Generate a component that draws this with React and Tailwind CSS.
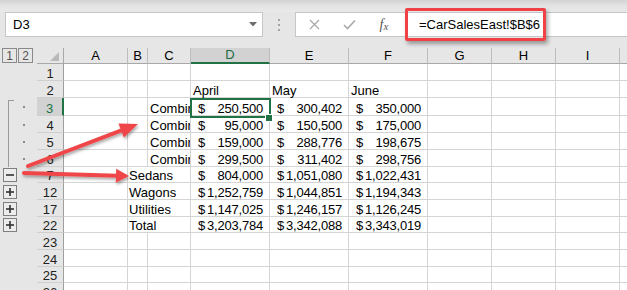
import React from "react";

const cols = [
  { k: "A", w: "w-[64px]" },
  { k: "B", w: "w-[20px]" },
  { k: "C", w: "w-[43px]" },
  { k: "D", w: "w-[79px]" },
  { k: "E", w: "w-[79px]" },
  { k: "F", w: "w-[79px]" },
  { k: "G", w: "w-[64px]" },
  { k: "H", w: "w-[64px]" },
  { k: "I", w: "w-[64px]" },
  { k: "J", w: "w-[64px]" },
];

const rows = [
  { n: 1, h: "h-[17px]" },
  { n: 2, h: "h-[17px]", heads: ["April", "May", "June"] },
  { n: 3, h: "h-[18px]", c: "Combined", nums: ["250,500", "300,402", "350,000"], mark: "dot", bracket: "top", sel: true },
  { n: 4, h: "h-[17px]", c: "Combined", nums: ["95,000", "150,500", "175,000"], mark: "dot", bracket: "mid" },
  { n: 5, h: "h-[17px]", c: "Combined", nums: ["159,000", "288,776", "198,675"], mark: "dot", bracket: "mid" },
  { n: 6, h: "h-[17px]", c: "Combined", nums: ["299,500", "311,402", "298,756"], mark: "dot", bracket: "mid" },
  { n: 7, h: "h-[16px]", b: "Sedans", nums: ["804,000", "1,051,080", "1,022,431"], mark: "minus" },
  { n: 12, h: "h-[17px]", b: "Wagons", nums: ["1,252,759", "1,044,851", "1,194,343"], mark: "plus" },
  { n: 17, h: "h-[17px]", b: "Utilities", nums: ["1,147,025", "1,246,157", "1,126,245"], mark: "plus" },
  { n: 22, h: "h-[16px]", b: "Total", nums: ["3,203,784", "3,342,088", "3,343,019"], mark: "plus" },
  { n: 23, h: "h-[17px]" },
  { n: 24, h: "h-[17px]" },
  { n: 25, h: "h-[16px]" },
  { n: 26, h: "h-[17px]" },
];

function OutlineBox({ plus }) {
  return (
    <div className="ml-[3px] w-[14px] h-[14px] border border-[#7f7f7f] bg-[#ececec] flex items-center justify-center">
      <svg width="10" height="10" viewBox="0 0 10 10">
        <line x1="1" y1="5" x2="9" y2="5" stroke="#333" strokeWidth="1.6" />
        {plus && <line x1="5" y1="1" x2="5" y2="9" stroke="#333" strokeWidth="1.6" />}
      </svg>
    </div>
  );
}

function Gutter({ row }) {
  return (
    <div className="w-[37px] relative flex items-center shrink-0">
      {row.bracket === "top" && (
        <div className="absolute left-[8px] top-[2px] bottom-0 w-[6px] border-l border-t border-[#9a9a9a]" />
      )}
      {row.bracket === "mid" && <div className="absolute left-[8px] top-0 bottom-0 border-l border-[#9a9a9a]" />}
      {row.mark === "dot" && <div className="ml-[23px] w-[2px] h-[2px] bg-[#8a8a8a]" />}
      {row.mark === "minus" && <OutlineBox />}
      {row.mark === "plus" && <OutlineBox plus />}
    </div>
  );
}

function Money({ v }) {
  return (
    <div className="flex-1 flex items-end justify-between pl-[7px] pr-[6px] leading-[13px]">
      <span>$</span>
      <span className="tracking-[-0.2px]">{v}</span>
    </div>
  );
}

function Row({ row }) {
  const active = row.sel;
  return (
    <div className={`flex ${row.h}`}>
      <Gutter row={row} />
      <div
        className={`w-[27px] shrink-0 flex items-end justify-center leading-[13px] border-b border-[#cfcfcf] ${
          active
            ? "bg-[#d2d2d2] text-[#217346] border-r-2 border-r-[#217346]"
            : "bg-[#e6e6e6] text-[#222] border-r border-r-[#9f9f9f]"
        }`}
      >
        {row.n}
      </div>
      <div className="flex bg-white">
        {cols.map((col) => {
          const base = `${col.w} shrink-0 border-b border-[#d4d4d4] flex relative`;
          if (col.k === "B") {
            return (
              <div key={col.k} className={`${base} ${row.b ? "" : "border-r"}`}>
                {row.b && (
                  <span className="pl-[1px] self-end leading-[13px] whitespace-nowrap relative z-10">{row.b}</span>
                )}
              </div>
            );
          }
          if (col.k === "C") {
            return (
              <div key={col.k} className={`${base} border-r overflow-hidden`}>
                {row.c && <span className="pl-[2px] self-end leading-[13px] whitespace-nowrap">{row.c}</span>}
              </div>
            );
          }
          const i = ["D", "E", "F"].indexOf(col.k);
          return (
            <div key={col.k} className={`${base} border-r`}>
              {i >= 0 && row.heads && <span className="pl-[2px] self-end leading-[13px]">{row.heads[i]}</span>}
              {i >= 0 && row.nums && <Money v={row.nums[i]} />}
              {i === 0 && active && (
                <>
                  <div className="absolute left-[-1px] top-[0px] w-[81px] h-[20px] border-2 border-[#217346] z-20" />
                  <div className="absolute left-[75px] top-[17px] w-[6px] h-[6px] bg-[#217346] ring-1 ring-white z-30" />
                </>
              )}
            </div>
          );
        })}
      </div>
    </div>
  );
}

function Arrow({ x1, y1, x2, y2, head, half }) {
  const dx = x2 - x1;
  const dy = y2 - y1;
  const len = Math.hypot(dx, dy);
  const ux = dx / len;
  const uy = dy / len;
  const bx = x2 - ux * head;
  const by = y2 - uy * head;
  const px = -uy * half;
  const py = ux * half;
  return (
    <g filter="url(#sh)">
      <line x1={x1} y1={y1} x2={bx + ux} y2={by + uy} stroke="#ef4749" strokeWidth="4" strokeLinecap="round" />
      <polygon points={`${x2},${y2} ${bx + px},${by + py} ${bx - px},${by - py}`} fill="#ef4749" />
    </g>
  );
}

export default function App() {
  return (
    <div className="w-[627px] h-[290px] overflow-hidden relative bg-[#e6e6e6] font-['Liberation_Sans',Arial,sans-serif] text-[13px] text-black">
      {/* top strip */}
      <div className="h-[12px] bg-gradient-to-b from-[#d3d3d3] via-[#e4e4e4] to-[#e9e9e9]" />

      {/* name box + formula bar */}
      <div className="flex h-[25px]">
        <div className="ml-[5px] w-[258px] h-[25px] bg-white border border-[#c6c6c6] flex items-center justify-between pl-[7px] pr-[5px]">
          <span>D3</span>
          <svg width="8" height="5" viewBox="0 0 8 5">
            <polygon points="0,0 8,0 4,4.5" fill="#6d6d6d" />
          </svg>
        </div>
        <div className="w-[32px] flex flex-col items-center justify-center gap-[3px]">
          <div className="w-[2px] h-[2px] bg-[#a3a3a3]" />
          <div className="w-[2px] h-[2px] bg-[#a3a3a3]" />
          <div className="w-[2px] h-[2px] bg-[#a3a3a3]" />
        </div>
        <div className="flex-1 h-[25px] bg-white border border-r-0 border-[#c6c6c6] flex items-center">
          <div className="w-[36px] flex justify-center">
            <svg width="11" height="11" viewBox="0 0 11 11">
              <path d="M1 1 L10 10 M10 1 L1 10" stroke="#a9a9a9" strokeWidth="1.3" />
            </svg>
          </div>
          <div className="w-[34px] flex justify-center">
            <svg width="13" height="11" viewBox="0 0 13 11">
              <path d="M1 6 L4.5 9.5 L12 1.5" stroke="#a9a9a9" strokeWidth="1.6" fill="none" />
            </svg>
          </div>
          <div className="w-[36px] flex justify-center font-['Liberation_Serif',serif] italic text-[#555] text-[14px] leading-none">
            <span>f</span>
            <span className="text-[11px] mt-[3px]">x</span>
          </div>
          <span className="ml-[17px]">=CarSalesEast!$B$6</span>
        </div>
      </div>

      <div className="h-[11px]" />

      {/* column header */}
      <div className="flex h-[16px]">
        <div className="w-[37px] shrink-0 flex items-start pl-[2px] gap-[1px] text-[12px] text-[#555]">
          <div className="w-[15px] h-[15px] border border-[#8a8a8a] flex items-center justify-center leading-none">1</div>
          <div className="w-[15px] h-[15px] border border-[#8a8a8a] flex items-center justify-center leading-none">2</div>
        </div>
        <div className="w-[27px] shrink-0 border-r border-b border-[#a8a8a8] flex items-end justify-end pr-[4px] pb-[2px]">
          <svg width="9" height="9" viewBox="0 0 9 9">
            <polygon points="9,0 9,9 0,9" fill="#b9b9b9" />
          </svg>
        </div>
        {cols.map((col) => (
          <div
            key={col.k}
            className={`${col.w} shrink-0 flex items-center justify-center border-r border-r-[#bdbdbd] ${
              col.k === "D"
                ? "bg-[#d2d2d2] text-[#1e6b40] border-b-2 border-b-[#217346]"
                : "border-b border-b-[#a8a8a8]"
            }`}
          >
            {col.k}
          </div>
        ))}
      </div>

      {rows.map((r) => (
        <Row key={r.n} row={r} />
      ))}

      {/* formula highlight */}
      <div className="absolute left-[405px] top-[8px] w-[141px] h-[33px] border-[3px] border-[#ef4146] rounded-[2px] shadow-[2px_3px_4px_rgba(0,0,0,0.35)]" />

      {/* callout arrows */}
      <svg className="absolute inset-0 pointer-events-none" width="627" height="290">
        <defs>
          <filter id="sh" x="-20%" y="-50%" width="140%" height="200%">
            <feDropShadow dx="1" dy="2" stdDeviation="1.5" floodColor="#000" floodOpacity="0.35" />
          </filter>
        </defs>
        <Arrow x1={28} y1={166} x2={138} y2={124} head={18} half={7.5} />
        <Arrow x1={24} y1={173} x2={129} y2={176} head={13} half={7} />
      </svg>
    </div>
  );
}
